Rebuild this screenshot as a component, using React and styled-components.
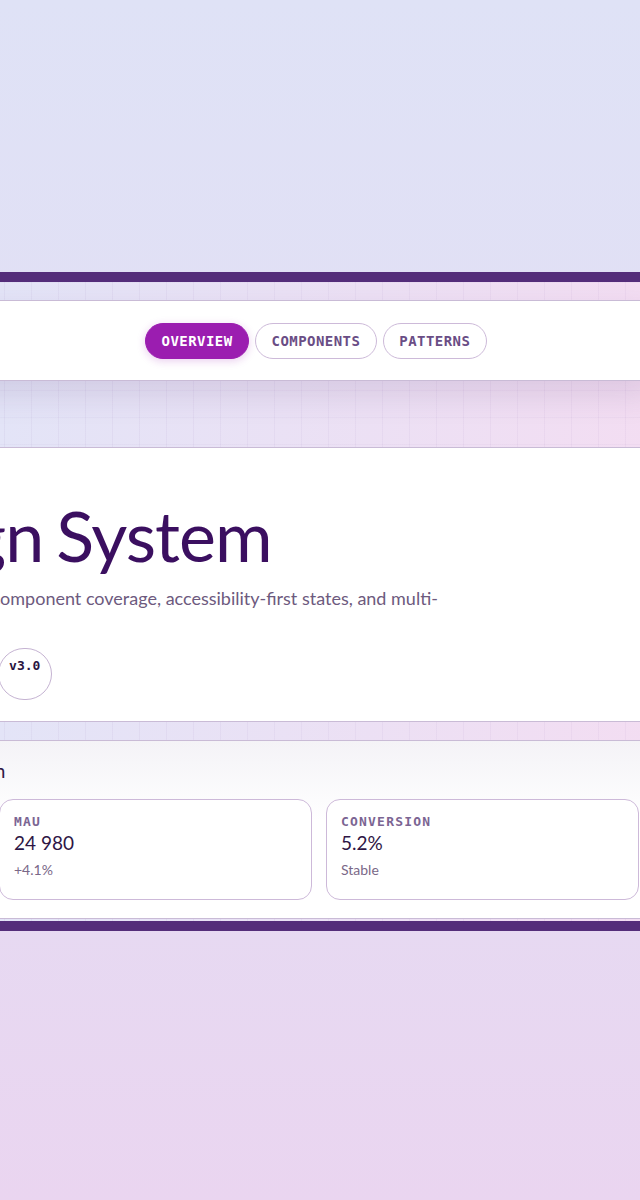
import styled, { createGlobalStyle } from "styled-components";

const GlobalStyle = createGlobalStyle`
  html, body {
    margin: 0;
    padding: 0;
  }
  body {
    overflow-x: hidden;
    background: linear-gradient(180deg, #dfe2f6 0%, #e3def4 50%, #ead5f0 100%);
    font-family: Lato, "Noto Sans", sans-serif;
  }
  * {
    box-sizing: border-box;
  }
`;

const Page = styled.div`
  min-height: 100vh;
  padding-top: 3px;
  display: flex;
  flex-direction: column;
  justify-content: center;
`;

const Frame = styled.div`
  width: 1055px;
  margin-left: -401px;
  border-top: 10px solid #542d7a;
  border-bottom: 10px solid #542d7a;
  padding: 18px 0 2px;
  display: flex;
  flex-direction: column;
  background:
    linear-gradient(90deg, rgba(110, 70, 150, 0.05) 1px, transparent 1px) 0 0 / 27px 27px,
    linear-gradient(180deg, rgba(110, 70, 150, 0.035) 1px, transparent 1px) 0 0 / 27px 27px,
    linear-gradient(90deg, #e3e4f7 0%, #e3e4f7 38%, #f3ddf2 100%);
`;

const Panel = styled.section`
  background: ${(p) => p.$bg || "#ffffff"};
  border-top: 1px solid #c9bbd6;
  border-bottom: 1px solid #c9bbd6;
  position: relative;
`;

const Nav = styled(Panel)`
  height: 81px;
  display: flex;
  align-items: center;
  gap: 6px;
  padding-left: 546px;
  margin-bottom: 66px;
  box-shadow: 0 14px 32px rgba(80, 50, 110, 0.13);
`;

const Pill = styled.button`
  height: 36px;
  padding: 0 15.5px;
  border-radius: 999px;
  font-family: "DejaVu Sans Mono", "Liberation Mono", monospace;
  font-size: 14px;
  font-weight: 700;
  letter-spacing: 0.45px;
  cursor: pointer;
  color: ${(p) => (p.$active ? "#ffffff" : "#6a4d85")};
  background: ${(p) => (p.$active ? "#9b1db0" : "#ffffff")};
  border: 1px solid ${(p) => (p.$active ? "#9b1db0" : "#cdbad9")};
  box-shadow: ${(p) => (p.$active ? "0 2px 8px rgba(155, 29, 176, 0.22)" : "none")};
`;

const Hero = styled(Panel)`
  height: 275px;
  padding: 49px 0 0 229px;
  margin-bottom: 18px;
`;

const Title = styled.h1`
  margin: 0 0 0 9px;
  font-size: 70px;
  line-height: 1.1;
  font-weight: 400;
  color: #3b0f60;
  letter-spacing: -1px;
  word-spacing: -4px;
`;

const Lead = styled.p`
  margin: 12px 0 0 3px;
  max-width: 630px;
  font-size: 18px;
  line-height: 25px;
  color: #6d5a7e;
`;

const BadgeRow = styled.div`
  display: flex;
  align-items: flex-start;
  gap: 8px;
  margin-top: 12px;
`;

const Badge = styled.span`
  font-family: "DejaVu Sans Mono", "Liberation Mono", monospace;
  font-size: 13px;
  font-weight: 700;
  color: #2b1542;
  border: 1px solid #c5b3d2;
  border-radius: 999px;
  background: #ffffff;
  ${(p) =>
    p.$round
      ? `
    width: 54px;
    height: 52px;
    padding-top: 9px;
    text-align: center;
  `
      : `
    height: 32px;
    padding: 7px 12px;
  `}
`;

const Stats = styled(Panel)`
  height: 179px;
  padding: 18px 15px 0;
  background: linear-gradient(180deg, #f4f3f7 0%, #ffffff 45%);
`;

const StatsHeading = styled.h2`
  margin: 0 0 16px;
  font-size: 19px;
  line-height: 24px;
  font-weight: 400;
  color: #2f1646;
`;

const CardGrid = styled.div`
  display: grid;
  grid-template-columns: repeat(3, 313px);
  justify-content: end;
  gap: 14px;
`;

const Card = styled.div`
  height: 101px;
  border: 1px solid #cdb9d9;
  border-radius: 14px;
  background: #ffffff;
  padding: 13px 14px 0;
`;

const CardLabel = styled.div`
  font-family: "DejaVu Sans Mono", "Liberation Mono", monospace;
  font-size: 13px;
  font-weight: 700;
  letter-spacing: 1.2px;
  line-height: 18px;
  color: #7b6593;
`;

const CardValue = styled.div`
  font-size: 19px;
  line-height: 24px;
  color: #2e1645;
`;

const CardNote = styled.div`
  margin-top: 6px;
  font-size: 14px;
  line-height: 18px;
  color: #7a6888;
`;

const tabs = ["OVERVIEW", "COMPONENTS", "PATTERNS"];

const metrics = [
  { label: "USERS", value: "112 400", note: "+2.8%" },
  { label: "MAU", value: "24 980", note: "+4.1%" },
  { label: "CONVERSION", value: "5.2%", note: "Stable" },
];

export default function App() {
  return (
    <>
      <GlobalStyle />
      <Page>
        <Frame>
          <Nav as="nav">
            {tabs.map((t, i) => (
              <Pill key={t} $active={i === 0}>
                {t}
              </Pill>
            ))}
          </Nav>
          <Hero>
            <Title>Design System</Title>
            <Lead>
              Shared tokens – full component coverage, accessibility-first states, and multi-brand theming.
            </Lead>
            <BadgeRow>
              <Badge>STABLE</Badge>
              <Badge>WCAG AA</Badge>
              <Badge $round>v3.0</Badge>
            </BadgeRow>
          </Hero>
          <Stats>
            <StatsHeading>Usage across every product surface this season</StatsHeading>
            <CardGrid>
              {metrics.map((m) => (
                <Card key={m.label}>
                  <CardLabel>{m.label}</CardLabel>
                  <CardValue>{m.value}</CardValue>
                  <CardNote>{m.note}</CardNote>
                </Card>
              ))}
            </CardGrid>
          </Stats>
        </Frame>
      </Page>
    </>
  );
}
